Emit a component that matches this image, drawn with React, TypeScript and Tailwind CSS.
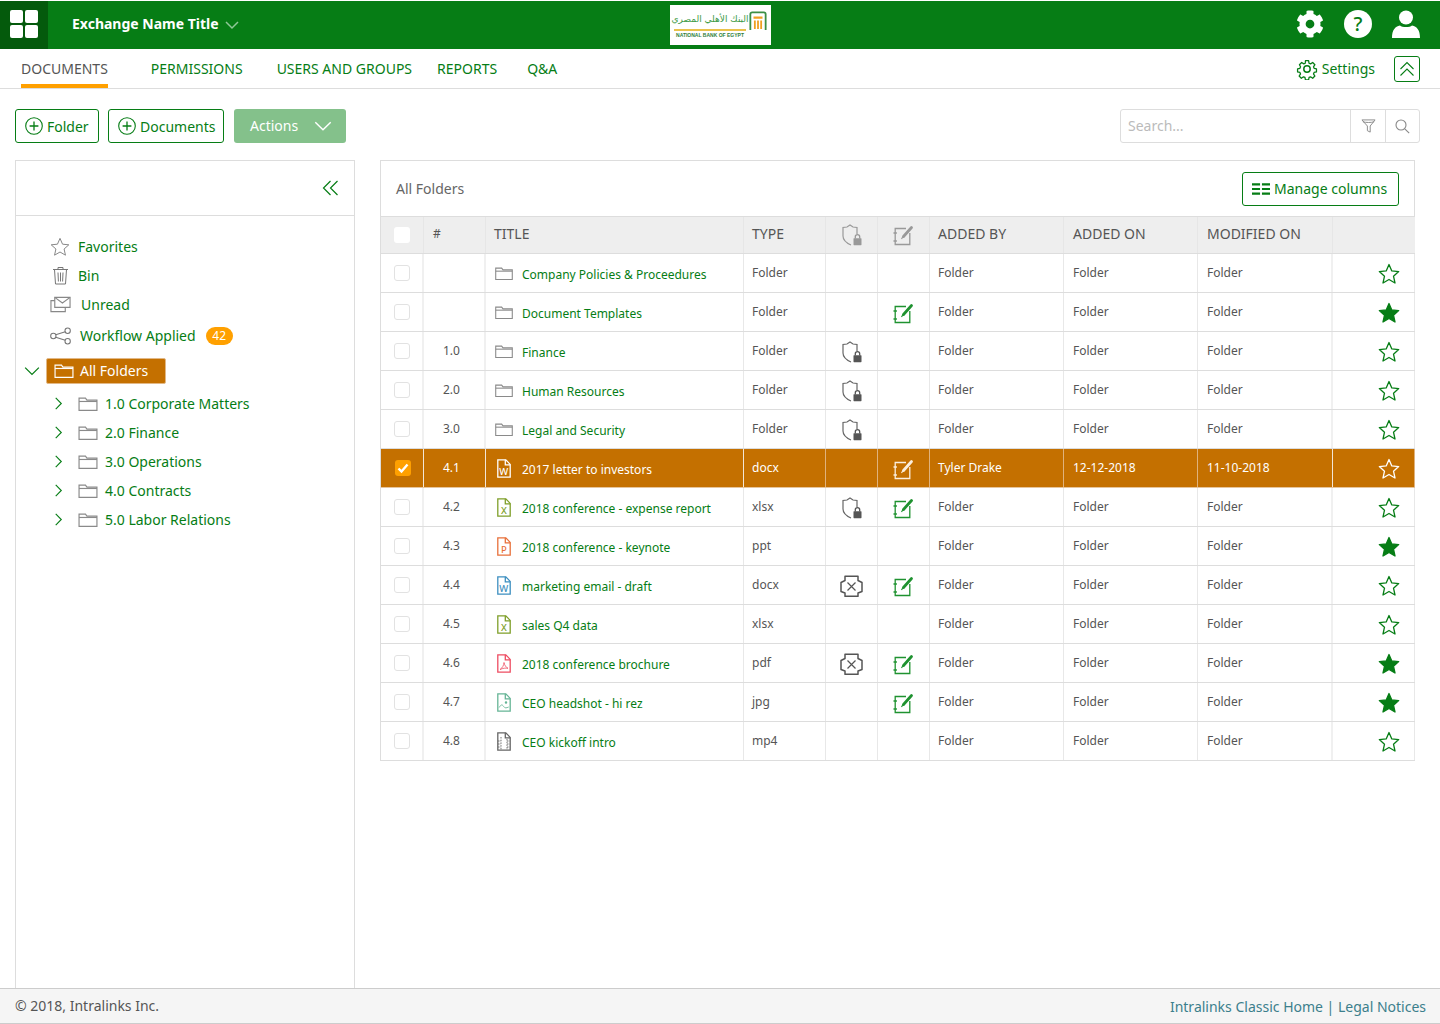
import React from "react";
import { FaCog } from "react-icons/fa";

const G = "#067d15";

function Chevron({ dir, size = 14, color = G, w = 1.3, className = "" }: { dir: "down" | "right" | "left" | "up"; size?: number; color?: string; w?: number; className?: string }) {
  const d = { down: "M1 4l6 6 6-6", up: "M1 10l6-6 6 6", right: "M4 1l6 6-6 6", left: "M10 1L4 7l6 6" }[dir];
  return (
    <svg width={size} height={size} viewBox="0 0 14 14" fill="none" stroke={color} strokeWidth={w} className={className}>
      <path d={d} />
    </svg>
  );
}

function Star({ filled, size = 22, color = G, w = 1.3 }: { filled?: boolean; size?: number; color?: string; w?: number }) {
  return (
    <svg width={size} height={size} viewBox="0 0 22 22" fill={filled ? color : "none"} stroke={color} strokeWidth={w} strokeLinejoin="round">
      <path d="M11 1.500l2.800 6.400 6.900.7-5.200 4.600 1.500 6.800L11 16.500l-6 3.500 1.500-6.800-5.200-4.600 6.900-.7z" />
    </svg>
  );
}

function Folder({ color = "#8a8a8a", size = 20 }: { color?: string; size?: number }) {
  return (
    <svg width={size} height={Math.round(size * 0.72)} viewBox="0 0 20 14.400" fill="none" stroke={color} strokeWidth="1.200">
      <path d="M.8 13.800V1.200h6.600l1.500 2h10.300v10.600z" />
      <path d="M.8 4.600h18.400" />
    </svg>
  );
}

function PlusCircle() {
  return (
    <svg width="18" height="18" viewBox="0 0 18 18" fill="none" stroke={G} strokeWidth="1.100">
      <circle cx="9" cy="9" r="8.300" />
      <path d="M9 4.600v8.800M4.600 9h8.800" strokeWidth="1.300" />
    </svg>
  );
}

function FileIcon({ color, letter, kind }: { color: string; letter?: string; kind?: "pdf" | "img" | "vid" }) {
  return (
    <svg width="14" height="19" viewBox="0 0 14 19" fill="none" stroke={color} strokeWidth="1.300">
      <path d="M.8.8h8l4.400 4.600v12.800H.8z" />
      <path d="M8.300.8v5h4.900" />
      {letter && (
        <text x="6.800" y="15.600" textAnchor="middle" fontSize="9.500" fontWeight="500" fontFamily="Noto Sans, sans-serif" fill={color} stroke="none">
          {letter}
        </text>
      )}
      {kind === "pdf" && <path d="M7 8.500c-.2 3-1.600 5.400-4 7 3-1.300 5.500-1.700 8-1.200-2-1-3.500-3-4-5.800z" strokeWidth=".8" />}
      {kind === "img" && (
        <>
          <path d="M2.200 14.500c2-3.500 3-3 4.500-1s2.500 1.500 5 .5" strokeWidth=".9" />
          <circle cx="9" cy="9.500" r=".6" />
        </>
      )}
      {kind === "vid" && <path d="M4 5v13M10 7v11M1 9h3M1 12h3M1 15h3M10 9h3M10 12h3M10 15h3" strokeWidth=".9" strokeDasharray="1.500 1.200" />}
    </svg>
  );
}

function ShieldLock({ color = "#555" }: { color?: string }) {
  return (
    <svg width="20" height="22" viewBox="0 0 20 22" fill="none">
      <path d="M15 10V3.500L11 3 8 1 5 3l-4 .5V12c0 4 3.500 7 8 9" stroke={color === "#555" ? "#666" : color} strokeWidth="1.200" />
      <rect x="11.500" y="14.200" width="8" height="7" rx=".6" fill={color} />
      <path d="M13.300 14.500v-1.700a2.200 2.200 0 0 1 4.400 0v1.700" stroke={color} strokeWidth="1.300" />
    </svg>
  );
}

function EditBook({ color = "#1f9230" }: { color?: string }) {
  return (
    <svg width="21" height="22" viewBox="0 0 21 22" fill="none" stroke={color} strokeWidth="1.300">
      <path d="M13 4.500H2.200v16h14.600V9" />
      <path d="M.5 9h3.400M.5 17h3.400" />
      <path d="M10.500 12.500L18.500 3.500" strokeWidth="2.800" strokeLinecap="round" />
      <path d="M8.500 15l1.500-2.500" strokeWidth="1.200" />
    </svg>
  );
}

function CrossBox() {
  return (
    <svg width="23" height="22" viewBox="0 0 23 22" fill="none" stroke="#555" strokeWidth="1.500" strokeLinejoin="round">
      <path d="M5 1.200h13v4.300l4 2v9l-4 1.500v3.300H5V18l-4-1.500v-9l4-2z" />
      <path d="M7.500 7.500l8 8M15.500 7.500l-8 8" strokeWidth="1.200" />
    </svg>
  );
}

type Row = {
  n: string;
  title: string;
  type: string;
  icon: React.ReactNode;
  lock?: "shield" | "cross";
  edit?: boolean;
  star?: boolean;
  sel?: boolean;
  by?: string;
  on?: string;
  mod?: string;
};

const folder = <Folder size={18} />;
const rows: Row[] = [
  { n: "", title: "Company Policies & Proceedures", type: "Folder", icon: folder },
  { n: "", title: "Document Templates", type: "Folder", icon: folder, edit: true, star: true },
  { n: "1.0", title: "Finance", type: "Folder", icon: folder, lock: "shield" },
  { n: "2.0", title: "Human Resources", type: "Folder", icon: folder, lock: "shield" },
  { n: "3.0", title: "Legal and Security", type: "Folder", icon: folder, lock: "shield" },
  { n: "4.1", title: "2017 letter to investors", type: "docx", icon: <FileIcon color="#fff" letter="W" />, edit: true, sel: true, by: "Tyler Drake", on: "12-12-2018", mod: "11-10-2018" },
  { n: "4.2", title: "2018 conference - expense report", type: "xlsx", icon: <FileIcon color="#7f9f2a" letter="X" />, lock: "shield", edit: true },
  { n: "4.3", title: "2018 conference - keynote", type: "ppt", icon: <FileIcon color="#e8703a" letter="P" />, star: true },
  { n: "4.4", title: "marketing email - draft", type: "docx", icon: <FileIcon color="#3d8fc0" letter="W" />, lock: "cross", edit: true },
  { n: "4.5", title: "sales Q4 data", type: "xlsx", icon: <FileIcon color="#7f9f2a" letter="X" /> },
  { n: "4.6", title: "2018 conference brochure", type: "pdf", icon: <FileIcon color="#ee4d62" kind="pdf" />, lock: "cross", edit: true, star: true },
  { n: "4.7", title: "CEO headshot - hi rez", type: "jpg", icon: <FileIcon color="#66b596" kind="img" />, edit: true, star: true },
  { n: "4.8", title: "CEO kickoff intro", type: "mp4", icon: <FileIcon color="#666" kind="vid" /> },
];

const GRID = "grid grid-cols-[43px_62px_258px_82px_52px_52px_134px_134px_135px_82px]";

function TableRow({ r }: { r: Row }) {
  const line = r.sel ? "border-r border-[#e0b27c]" : "border-r border-[#e8e8e8]";
  const strong = r.sel ? "border-r border-[#f3e6d6]" : "border-r-2 border-[#f0f0f0]";
  const text = r.sel ? "text-white" : "text-[#555]";
  return (
    <div className={`${GRID} h-[39px] border-b text-[12px] ${r.sel ? "border-[#e6c49c] bg-[#c47000]" : "border-[#ddd] bg-white"} ${text}`}>
      <div className={`flex items-center justify-center pl-[1px] ${strong}`}>
        {r.sel ? (
          <span className="flex h-4 w-4 items-center justify-center rounded-[3px] bg-[#ffa000]">
            <svg width="12" height="12" viewBox="0 0 12 12" fill="none" stroke="#fff" strokeWidth="2.400">
              <path d="M1.500 6.500l3 3 6-7" />
            </svg>
          </span>
        ) : (
          <span className="h-4 w-4 rounded-[3px] border border-[#e2e2e2] bg-white" />
        )}
      </div>
      <div className={`flex items-center pl-[19px] ${strong}`}>{r.n}</div>
      <div className={`flex items-center ${r.sel ? "border-r border-[#f3e6d6]" : "border-r border-[#e8e8e8]"}`}>
        <span className="flex w-[36px] justify-center">{r.icon}</span>
        <span className={`pt-[4px] ${r.sel ? "text-white" : "text-[#067d15]"}`}>{r.title}</span>
      </div>
      <div className={`flex items-center pl-[8px] ${line}`}>{r.type}</div>
      <div className={`flex items-center justify-center pt-[2px] ${line}`}>
        {r.lock === "shield" && <ShieldLock />}
        {r.lock === "cross" && <CrossBox />}
      </div>
      <div className={`flex items-center justify-center pt-[2px] ${line}`}>{r.edit && <EditBook color={r.sel ? "#fbeedd" : "#1f9230"} />}</div>
      <div className={`flex items-center pl-[8px] ${line}`}>{r.by ?? "Folder"}</div>
      <div className={`flex items-center pl-[9px] ${line}`}>{r.on ?? "Folder"}</div>
      <div className={`flex items-center pl-[9px] ${strong}`}>{r.mod ?? "Folder"}</div>
      <div className={`flex items-center justify-end pr-[14px] pt-[1px] ${line}`}>
        <Star filled={r.star} color={r.sel ? "#fff" : G} />
      </div>
    </div>
  );
}

function SideLink({ icon, label, gap, h = "h-[29px]", extra }: { icon: React.ReactNode; label: string; gap: string; h?: string; extra?: React.ReactNode }) {
  return (
    <div className={`flex ${h} items-center pl-[34px] text-[14px] text-[#067d15]`}>
      <span className={`flex w-[21px] justify-center ${gap}`}>{icon}</span>
      <span>{label}</span>
      {extra}
    </div>
  );
}

function TreeItem({ label }: { label: string }) {
  return (
    <div className="flex h-[29px] items-center pl-[36px] text-[14px] text-[#067d15]">
      <Chevron dir="right" size={13} className="mr-[13px]" w={1.200} />
      <span className="mr-[7px]">
        <Folder />
      </span>
      <span>{label}</span>
    </div>
  );
}

export default function App() {
  return (
    <div className="flex h-[1024px] w-[1440px] flex-col overflow-hidden bg-white font-['Noto_Sans',sans-serif]">
      {/* top bar */}
      <header className="relative mt-[1px] flex h-[48px] shrink-0 items-center bg-[#067d15]">
        <div className="grid h-[48px] w-[48px] grid-cols-2 content-center justify-center gap-[2px] bg-[#045a0c] px-[10px] pb-[2px]">
          <span className="h-[13px] rounded-[2px] bg-white" />
          <span className="h-[13px] rounded-[2px] bg-white" />
          <span className="h-[13px] rounded-[2px] bg-white" />
          <span className="h-[13px] rounded-[2px] bg-white" />
        </div>
        <span className="ml-[24px] pb-[3px] text-[14px] font-bold text-white">Exchange Name Title</span>
        <Chevron dir="down" size={14} color="#8fc797" w={1.500} className="ml-[6px]" />
        <div className="absolute left-[670px] top-[4px] flex h-[40px] w-[101px] bg-white pl-[3px] pt-[6px]">
          <div className="flex w-[74px] flex-col items-center">
            <span dir="rtl" className="h-[17px] whitespace-nowrap font-['DejaVu_Sans',sans-serif] text-[9px] leading-[17px] text-[#3c9a45]">
              البنك الأهلي المصري
            </span>
            <span className="mt-[1px] h-[2px] w-[72px] bg-[#e9c24a]" />
            <span className="mt-[1px] whitespace-nowrap font-['Liberation_Sans',sans-serif] text-[5px] font-bold leading-[6px] text-[#2f7f3a]">NATIONAL BANK OF EGYPT</span>
          </div>
          <svg width="18" height="22" viewBox="0 0 20 22" className="ml-[2px] mt-[-1px]">
            <path d="M1.500 21V3.500a2 2 0 0 1 2-2h13a2 2 0 0 1 2 2V21" fill="none" stroke="#3c8f45" strokeWidth="2" />
            <path d="M5 6h10v2.500H5z" fill="#f0a020" />
            <path d="M5.500 10.500h2V20h-2zM9 10.500h2V20H9zM12.500 10.500h2V20h-2z" fill="#f0a020" />
          </svg>
        </div>
        <div className="ml-auto flex items-center pb-[2px]">
          <FaCog size={28} color="#fff" />
          <span className="ml-[20px] flex h-[28px] w-[28px] items-center justify-center rounded-full bg-white text-[20px] font-medium leading-none text-[#067d15]">?</span>
          <svg width="28" height="28" viewBox="0 0 28 28" className="ml-[20px] mr-[20px]" fill="#fff">
            <circle cx="14" cy="7.500" r="7" />
            <path d="M0 28c0-8 3-11.500 8-12.500 2 2 10 2 12 0 5 1 8 4.500 8 12.500z" />
          </svg>
        </div>
      </header>

      {/* tabs */}
      <nav className="flex h-[40px] shrink-0 items-stretch border-b border-[#ddd] pl-[21px] pr-[20px] text-[14px] text-[#067d15]">
        <span className="flex items-center border-b-[4px] border-[#ffa000] pt-[4px] text-[#555]">DOCUMENTS</span>
        <span className="ml-[43px] flex items-center">PERMISSIONS</span>
        <span className="ml-[34px] flex items-center">USERS AND GROUPS</span>
        <span className="ml-[25px] flex items-center">REPORTS</span>
        <span className="ml-[30px] flex items-center">Q&amp;A</span>
        <div className="ml-auto flex items-center">
          <svg width="22" height="22" viewBox="0 0 24 24" fill="none" stroke={G} strokeWidth="1.600" strokeLinejoin="round">
            <circle cx="12" cy="12" r="3.500" />
            <path d="M10 1.500h4l.6 3.200 1.900.8 2.700-1.800 2.800 2.800-1.800 2.700.8 1.900 3 .6v4l-3 .6-.8 1.900 1.800 2.700-2.800 2.800-2.700-1.800-1.900.8-.6 3h-4l-.6-3-1.900-.8-2.700 1.800-2.800-2.800 1.800-2.700-.8-1.900-3-.6v-4l3-.6.8-1.900L2.400 6.500l2.800-2.800 2.700 1.800 1.900-.8z" transform="translate(1.700 1.700) scale(.86)" />
          </svg>
          <span className="ml-[4px]">Settings</span>
          <span className="ml-[19px] flex h-[26px] w-[26px] items-center justify-center rounded-[3px] border border-[#067d15]">
            <svg width="16" height="16" viewBox="0 0 16 16" fill="none" stroke={G} strokeWidth="1.100">
              <path d="M1.500 8L8 1.500 14.500 8M1.500 14.500L8 8l6.500 6.500" />
            </svg>
          </span>
        </div>
      </nav>

      {/* toolbar */}
      <div className="flex h-[71px] shrink-0 items-start pl-[15px] pr-[20px] pt-[20px] text-[14px]">
        <button className="flex h-[34px] w-[84px] items-center rounded-[3px] border border-[#067d15] pl-[9px] text-[#067d15]">
          <PlusCircle />
          <span className="ml-[4px]">Folder</span>
        </button>
        <button className="ml-[9px] flex h-[34px] w-[116px] items-center rounded-[3px] border border-[#067d15] pl-[9px] text-[#067d15]">
          <PlusCircle />
          <span className="ml-[4px]">Documents</span>
        </button>
        <button className="ml-[10px] flex h-[34px] w-[112px] items-center rounded-[3px] bg-[#84c18b] pb-[1px] pl-[16px] text-white">
          <span>Actions</span>
          <Chevron dir="down" size={18} color="#fff" w={1.100} className="ml-[16px]" />
        </button>
        <div className="ml-auto flex h-[34px] w-[300px] items-stretch rounded-[3px] border border-[#ddd] text-[#bbb]">
          <span className="flex flex-1 items-center pb-[1px] pl-[7px]">Search...</span>
          <span className="flex w-[35px] items-center justify-center border-l border-[#ddd]">
            <svg width="15" height="16" viewBox="0 0 16 16" fill="none" stroke="#888" strokeWidth="1">
              <path d="M1 1.500h14L9.800 8v6.500l-3-1.500V8z" />
              <path d="M2 3.500c3 1 9 1 12 0" />
            </svg>
          </span>
          <span className="flex w-[34px] items-center justify-center border-l border-[#ddd]">
            <svg width="15" height="15" viewBox="0 0 15 15" fill="none" stroke="#888" strokeWidth="1.100">
              <circle cx="6" cy="6" r="5" />
              <path d="M9.800 9.800L14.200 14.200" />
            </svg>
          </span>
        </div>
      </div>

      {/* main */}
      <main className="flex min-h-0 flex-1 pl-[15px]">
        <aside className="w-[340px] shrink-0 border-x border-t border-[#ddd]">
          <div className="flex h-[55px] items-center justify-end border-b border-[#ddd] pr-[15px]">
            <svg width="17" height="16" viewBox="0 0 17 16" fill="none" stroke={G} strokeWidth="1.200">
              <path d="M8.500 1L1.500 8l7 7M15.500 1l-7 7 7 7" />
            </svg>
          </div>
          <div className="pt-[16px]">
            <SideLink icon={<Star size={20} color="#888" w={1.100} />} label="Favorites" gap="-ml-[1px] mr-[8px]" />
            <SideLink
              icon={
                <svg width="17" height="19" viewBox="0 0 17 19" fill="none" stroke="#777" strokeWidth="1">
                  <path d="M1 3.500h15M6 3.500V1.500h5v2M2.500 3.500l1 14.500h10l1-14.500M6 6.500l.4 9M8.500 6.500v9M11 6.500l-.4 9" />
                </svg>
              }
              label="Bin"
              gap="mr-[7px]"
            />
            <SideLink
              icon={
                <svg width="22" height="17" viewBox="0 0 22 17" fill="none" stroke="#888" strokeWidth="1.200">
                  <path d="M5 1h16v10.500H5z" />
                  <path d="M5 1l8 6 8-6" />
                  <path d="M5 4.500H1V16h15v-4.500" />
                </svg>
              }
              label="Unread"
              gap="mr-[10px]"
            />
            <SideLink
              icon={
                <svg width="22" height="18" viewBox="0 0 22 18" fill="none" stroke="#777" strokeWidth="1.100">
                  <circle cx="3.500" cy="9" r="2.800" />
                  <circle cx="18.500" cy="3.500" r="2.800" />
                  <circle cx="18.500" cy="14.500" r="2.800" />
                  <path d="M6 7.800L16 4.500M6 10.200l10 3.300" />
                </svg>
              }
              label="Workflow Applied"
              gap="mr-[9px]"
              h="h-[33px]"
              extra={<span className="ml-[10px] flex h-[18px] w-[27px] items-center justify-center rounded-full bg-[#ffa000] text-[12px] text-white">42</span>}
            />
            <div className="flex h-[37px] items-center pl-[8px]">
              <Chevron dir="down" size={16} w={1.100} />
              <div className="ml-[6px] flex h-[26px] w-[120px] items-center rounded-[2px] border border-[#e2b886] bg-[#c47000] pl-[7px] text-[14px] text-white">
                <Folder color="#fff" />
                <span className="ml-[6px]">All Folders</span>
              </div>
            </div>
            <TreeItem label="1.0 Corporate Matters" />
            <TreeItem label="2.0 Finance" />
            <TreeItem label="3.0 Operations" />
            <TreeItem label="4.0 Contracts" />
            <TreeItem label="5.0 Labor Relations" />
          </div>
        </aside>

        <section className="ml-[25px] w-[1035px] shrink-0">
          <div className="flex h-[56px] items-center justify-between border-x border-t border-[#ddd] pl-[15px] pr-[15px] text-[14px]">
            <span className="text-[#666]">All Folders</span>
            <button className="flex h-[34px] w-[157px] items-center rounded-[3px] border border-[#067d15] pl-[9px] text-[#067d15]">
              <svg width="18" height="12" viewBox="0 0 19 12" fill={G} className="mr-[4px]">
                <path d="M0 0h8.500v2.200H0zM10.500 0H19v2.200h-8.500zM0 4.900h8.500v2.200H0zM10.500 4.900H19v2.200h-8.500zM0 9.800h8.500V12H0zM10.500 9.800H19V12h-8.500z" />
              </svg>
              Manage columns
            </button>
          </div>
          <div className={`${GRID} h-[38px] items-stretch border border-r-0 border-[#ddd] bg-[#eee] text-[14px] text-[#555]`}>
            <div className="flex items-center justify-center border-r border-[#e6e6e6]">
              <span className="h-4 w-4 rounded-[3px] bg-white" />
            </div>
            <div className="flex items-center border-r border-[#e6e6e6] pb-[3px] pl-[9px] text-[12px]">#</div>
            <div className="flex items-center border-r border-[#e6e6e6] pb-[3px] pl-[8px]">TITLE</div>
            <div className="flex items-center border-r border-[#e6e6e6] pb-[3px] pl-[8px]">TYPE</div>
            <div className="flex items-center justify-center border-r border-[#e6e6e6]">
              <ShieldLock color="#999" />
            </div>
            <div className="flex items-center justify-center border-r border-[#e6e6e6]">
              <EditBook color="#999" />
            </div>
            <div className="flex items-center border-r border-[#e6e6e6] pb-[3px] pl-[8px]">ADDED BY</div>
            <div className="flex items-center border-r border-[#e6e6e6] pb-[3px] pl-[9px]">ADDED ON</div>
            <div className="flex items-center border-r border-[#e6e6e6] pb-[3px] pl-[9px]">MODIFIED ON</div>
            <div />
          </div>
          <div className="border-l border-[#ddd]">
            {rows.map((r) => (
              <TableRow key={r.title} r={r} />
            ))}
          </div>
        </section>
      </main>

      {/* footer */}
      <footer className="flex h-[36px] shrink-0 items-center justify-between border-y border-[#ccc] bg-[#f5f5f5] pl-[15px] pr-[14px] text-[14px] text-[#555]">
        <span className="pb-[2px]">© 2018, Intralinks Inc.</span>
        <span className="text-[#3c7f8c]">Intralinks Classic Home | Legal Notices</span>
      </footer>
    </div>
  );
}
